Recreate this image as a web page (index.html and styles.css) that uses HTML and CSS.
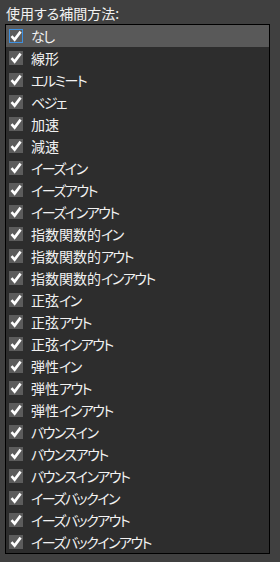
FILE: index.html
```html
<!DOCTYPE html>
<html lang="ja">
<head>
    <meta charset="UTF-8">
    <title>補間方法</title>
    <link rel="stylesheet" href="styles.css">
</head>
<body>
    <div class="panel">
        <div class="caption">使用する補間方法:</div>
        <div class="list" id="list"></div>
    </div>
    <script src="script.js"></script>
</body>
</html>
```
FILE: script.js
```js
const items = [
    "なし", "線形", "エルミート", "ベジェ", "加速", "減速",
    "イーズイン", "イーズアウト", "イーズインアウト",
    "指数関数的イン", "指数関数的アウト", "指数関数的インアウト",
    "正弦イン", "正弦アウト", "正弦インアウト",
    "弾性イン", "弾性アウト", "弾性インアウト",
    "バウンスイン", "バウンスアウト", "バウンスインアウト",
    "イーズバックイン", "イーズバックアウト", "イーズバックインアウト"
];

// kana is narrower in the original UI font, so tighten it
function tighten(text) {
    return text.replace(/[\u3040-\u30ff]+/g, m => '<span class="kana">' + m + '</span>');
}

const list = document.getElementById("list");
items.forEach((name, i) => {
    let row = document.createElement("div");
    row.className = i === 0 ? "row selected" : "row";
    row.innerHTML =
        '<span class="check"><svg viewBox="0 0 14 14" width="14" height="14">' +
        '<path d="M2.5 7.2 L5.6 10.6 L11.6 2.6" fill="none" stroke="#fff" stroke-width="2.6"/>' +
        '</svg></span><span class="label">' + tighten(name) + '</span>';
    list.appendChild(row);
});
```
FILE: styles.css
```css
body {
    margin: 0;
    background-color: #404040;
    font-family: "Noto Sans CJK JP", sans-serif;
    font-feature-settings: "palt";
    color: #f2f2f2;
}
.panel {
    padding: 3px 10px 0 5px;
}
.caption {
    font-size: 14px;
    line-height: 20px;
    height: 21px;
    padding-left: 1px;
}
.list {
    background: #2d2d2d;
    border: 1px solid #000;
    width: 263px;
}
.row {
    display: flex;
    align-items: center;
    height: 22px;
    padding-left: 3px;
    font-size: 14px;
}
.row.selected {
    background: #595959;
}
.check {
    display: flex;
    width: 14px;
    height: 14px;
    background: #5c5c5c;
    box-sizing: border-box;
}
.selected .check {
    border: 1px solid #3d8fe0;
}
.selected .check svg {
    margin: -1px;
}
.label {
    margin-left: 8px;
    line-height: 22px;
}
.kana {
    letter-spacing: -1.5px;
}
```
